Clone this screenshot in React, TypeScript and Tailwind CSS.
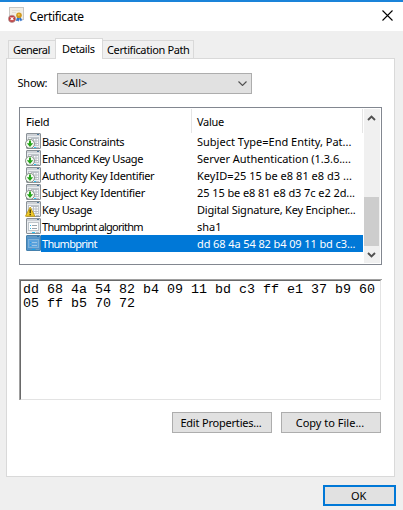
import React from "react";

type Badge = "arrow" | "warn" | "none" | "selected";

const rows: { field: string; value: string; badge: Badge; ft: string; vt: string }[] = [
  { field: "Basic Constraints", value: "Subject Type=End Entity, Pat...", badge: "arrow", ft: "tracking-[-0.38px]", vt: "" },
  { field: "Enhanced Key Usage", value: "Server Authentication (1.3.6....", badge: "arrow", ft: "tracking-[-0.36px]", vt: "tracking-[-0.03px]" },
  { field: "Authority Key Identifier", value: "KeyID=25 15 be e8 81 e8 d3 ...", badge: "arrow", ft: "tracking-[-0.32px]", vt: "tracking-[0.03px]" },
  { field: "Subject Key Identifier", value: "25 15 be e8 81 e8 d3 7c e2 2d...", badge: "arrow", ft: "tracking-[-0.31px]", vt: "tracking-[-0.08px]" },
  { field: "Key Usage", value: "Digital Signature, Key Encipher...", badge: "warn", ft: "tracking-[-0.4px]", vt: "tracking-[-0.21px]" },
  { field: "Thumbprint algorithm", value: "sha1", badge: "none", ft: "tracking-[-0.73px]", vt: "" },
  { field: "Thumbprint", value: "dd 68 4a 54 82 b4 09 11 bd c3...", badge: "selected", ft: "tracking-[-0.7px]", vt: "tracking-[-0.1px]" },
];

function FieldIcon({ badge }: { badge: Badge }) {
  const sel = badge === "selected";
  return (
    <svg width="16" height="17" viewBox="0 0 16 17" className="block shrink-0">
      <rect x="1.5" y="0.5" width="14" height="15" rx="0.5" fill={sel ? "#4f93cb" : "#e9ecef"} stroke={sel ? "#4580ac" : "#8a9197"} />
      <rect x="2" y="1" width="13" height="2" fill={sel ? "#5f97c3" : "#cdd1d6"} />
      <rect x="12" y="1" width="2" height="1" fill={sel ? "#2b73ad" : "#4c7697"} />
      <rect x="3.5" y="4.5" width="10" height="8" fill={sel ? "#5ba2dc" : "#fcfdfd"} stroke={sel ? "#7fb2da" : "#bfc5ca"} />
      {badge === "arrow" || badge === "warn" ? (
        <path d="M6 5.5h7M6 8h7M6 10.5h7M8.5 5v7M11 5v7" stroke="#b2b8bf" strokeWidth="0.9" />
      ) : (
        <g>
          <path d="M7 7.5h5M7 10.5h5" stroke={sel ? "#9cc6e8" : "#9aa2aa"} />
          <path d="M5 7.5h1M5 10.5h1" stroke={sel ? "#1d9cf0" : "#33b4e5"} />
        </g>
      )}
      <path d={badge === "arrow" ? "M9 14.5h2" : "M7 14.5h3"} stroke={sel ? "#14a4ef" : "#2dc0ee"} />
      <path d="M11 14.5h3" stroke={sel ? "#6ba0ca" : "#b6bdc4"} />
      {badge === "arrow" && (
        <g>
          <circle cx="5" cy="10.8" r="4.5" fill="#f6faf4" stroke="#7b827c" strokeWidth="0.9" />
          <path d="M4 7.5h2v2.7h2.2L5 14 1.8 10.2H4z" fill="#27a51b" />
        </g>
      )}
      {badge === "warn" && (
        <g>
          <path d="M5.2 6 9.9 15.2H.5z" fill="#f0cb2a" stroke="#bf9a18" strokeWidth="0.9" strokeLinejoin="round" />
          <path d="M5.2 8.6v3.6M5.2 13v1.3" stroke="#3a2e08" strokeWidth="1.3" />
        </g>
      )}
    </svg>
  );
}

function CertIcon() {
  return (
    <svg width="16" height="16" viewBox="0 0 16 16" className="block">
      <rect x="1.5" y="0.5" width="14" height="12" fill="#f1eee6" stroke="#c9c7c3" />
      <path d="M4 3.5h8M4 5.5h4" stroke="#e2ded6" />
      <path d="M9.3 9.5 8 14l1.7-.3 1 1 .6-3.7zM12.3 9.5l2.1 4.3-1.6-.2-.8 1-.7-3.6z" fill="#3272c9" />
      <circle cx="11" cy="8.2" r="2.8" fill="#d2991d" />
      <circle cx="10.8" cy="7.8" r="1.1" fill="#eec754" />
      <circle cx="4" cy="11.8" r="3.6" fill="#c23b3d" stroke="#a99f9f" strokeWidth="0.7" />
      <path d="m2.6 10.4 2.8 2.8m0-2.8-2.8 2.8" stroke="#fff" strokeWidth="1.2" />
    </svg>
  );
}

export default function App() {
  return (
    <div className="flex h-[510px] w-[403px] flex-col overflow-hidden border-t-2 border-[#1a83d9] bg-[#efefef] font-['Noto_Sans','Open_Sans',sans-serif] text-[11px] whitespace-nowrap text-black">
      <header className="flex h-[29px] shrink-0 items-start bg-white pl-2">
        <div className="pt-[5px]"><CertIcon /></div>
        <h1 className="ml-[5.5px] pt-[4px] text-[12px] leading-[21px] tracking-[-0.3px]">Certificate</h1>
        <svg width="11" height="11" viewBox="0 0 11 11" className="mt-[8px] mr-[10px] ml-auto">
          <path d="m.5.5 10 10m0-10-10 10" stroke="#000" strokeWidth="1.1" />
        </svg>
      </header>

      <nav className="flex h-[27px] shrink-0 items-end pl-2">
        <div className="h-[18px] w-[47px] border-t border-l border-[#d9d9d9] bg-[#f0f0f0] pl-[4px] leading-[18px] tracking-[-0.55px]">General</div>
        <div className="z-10 -mb-px h-[21px] w-[48px] border-x border-t border-[#d9d9d9] bg-white pl-[6px] leading-[19px] tracking-[-0.4px]">Details</div>
        <div className="h-[18px] w-[91px] border-t border-r border-[#d9d9d9] bg-[#f0f0f0] pl-[4px] leading-[18px] tracking-[-0.38px]">Certification Path</div>
      </nav>

      <main className="ml-[6px] flex h-[419px] w-[389px] shrink-0 flex-col border border-[#d9d9d9] bg-white pl-3">
        <div className="mt-[14px] flex h-[21px] shrink-0">
          <span className="-ml-[1.5px] w-[37.5px] leading-[20px] tracking-[-0.2px]">Show:</span>
          <div className="ml-[2px] flex h-[21px] w-[195px] items-center justify-between border border-[#adadad] bg-[#e1e1e1] pr-1 pl-1">
            <span>&lt;All&gt;</span>
            <svg width="9" height="5" viewBox="0 0 9 5"><path d="m.5.5 4 4 4-4" fill="none" stroke="#505050" strokeWidth="1.1" /></svg>
          </div>
        </div>

        <section className="mt-[13px] flex h-[158px] w-[363px] shrink-0 border border-[#828790] p-px">
          <div className="w-[343px]">
            <div className="flex h-[24px] leading-[25px]">
              <div className="w-[171px] border-r border-[#e5e5e5] pl-[5px] tracking-[-0.2px]">Field</div>
              <div className="w-[171px] border-r border-[#e5e5e5] pl-[5px] tracking-[-0.3px]">Value</div>
            </div>
            {rows.map((r) => (
              <div key={r.field} className="flex h-[17px] pl-[4px] leading-[17px]">
                <FieldIcon badge={r.badge} />
                <div className={"flex w-[322px] pl-[1px] " + (r.badge === "selected" ? "bg-[#0078d7] text-white" : "")}>
                  <span className={"w-[155px] shrink-0 " + r.ft}>{r.field}</span>
                  <span className={r.vt}>{r.value}</span>
                </div>
              </div>
            ))}
          </div>
          <div className="flex h-full w-[16px] flex-col items-center bg-[#f0f0f0]">
            <svg width="9" height="6" viewBox="0 0 9 6" className="mt-[6px] mr-px"><path d="m1 5 3.5-3.5L8 5" fill="none" stroke="#505050" strokeWidth="1.9" /></svg>
            <div className="mt-[76px] h-[49px] w-[15px] self-start bg-[#cdcdcd]" />
            <svg width="9" height="6" viewBox="0 0 9 6" className="mt-[6px] mr-px"><path d="m1 1 3.5 3.5L8 1" fill="none" stroke="#505050" strokeWidth="1.9" /></svg>
          </div>
        </section>

        <div className="mt-[14px] h-[121px] w-[363px] shrink-0 border-t border-l border-[#a0a0a0]">
          <div className="h-[120px] w-[361px] border border-t-[#696969] border-r-[#e3e3e3] border-b-[#e3e3e3] border-l-[#696969] pt-[2px] pl-[2px] font-['Liberation_Mono',monospace] text-[13.33px] leading-[14px]">
            <div>dd 68 4a 54 82 b4 09 11 bd c3 ff e1 37 b9 60</div>
            <div>05 ff b5 70 72</div>
          </div>
        </div>

        <div className="mt-[12px] ml-[153px] flex gap-[9px]">
          <button className="h-[21px] w-[100px] border border-[#adadad] bg-[#e1e1e1] pr-[2px] leading-[20px] tracking-[-0.2px]">Edit Properties...</button>
          <button className="h-[21px] w-[100px] border border-[#adadad] bg-[#e1e1e1] pr-[2px] leading-[20px]">Copy to File...</button>
        </div>
      </main>

      <button className="mt-[8px] ml-[323px] h-[21px] w-[73px] shrink-0 border-2 border-[#0078d7] bg-[#e1e1e1] pr-[2px] leading-[18px] tracking-[-0.3px]">OK</button>
    </div>
  );
}
